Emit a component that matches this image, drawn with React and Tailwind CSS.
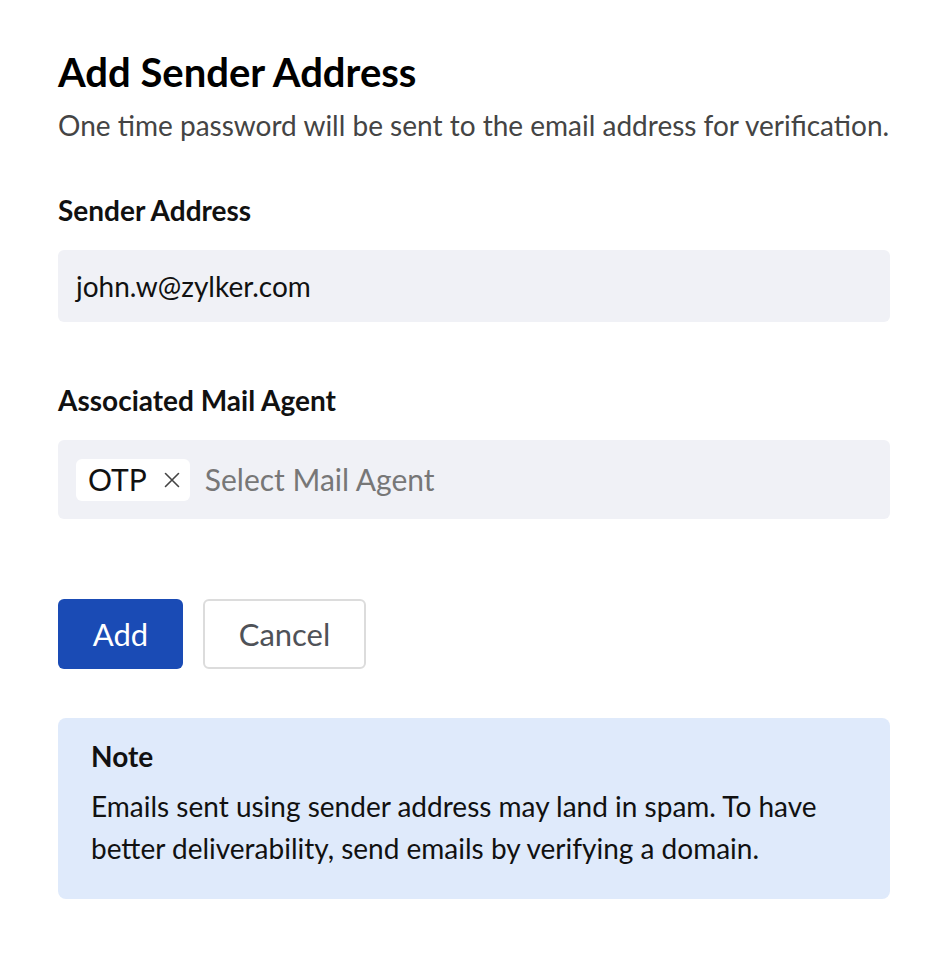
import React from 'react';

const App = () => {
  return (
    <div className="min-h-screen bg-white font-['Lato',sans-serif] text-[#111]">
      <div className="px-[58px] pt-[48px] w-[948px]">
        <h1 className="text-[40px] leading-[48px] font-bold text-black">Add Sender Address</h1>
        <p className="mt-[11px] text-[28px] leading-[36px] text-[#444]">
          One time password will be sent to the email address for verification.
        </p>

        {/* Sender Address */}
        <div className="mt-[49px]">
          <label className="block text-[28px] leading-[36px] font-bold">Sender Address</label>
          <div className="mt-[22px] h-[72px] rounded-[6px] bg-[#f0f1f6] px-[18px] flex items-center text-[28px]">
            john.w@zylker.com
          </div>
        </div>

        {/* Associated Mail Agent */}
        <div className="mt-[60px]">
          <label className="block text-[28px] leading-[36px] font-bold">Associated Mail Agent</label>
          <div className="mt-[22px] h-[79px] rounded-[6px] bg-[#f0f1f6] px-[18px] flex items-center gap-[15px]">
            <span className="flex items-center gap-[17px] bg-white rounded-[6px] h-[42px] pl-[12px] pr-[10px] text-[30px]">
              OTP
              <svg width="16" height="16" viewBox="0 0 16 16" className="text-[#444]">
                <path d="M1.5 1.5 L14.5 14.5 M14.5 1.5 L1.5 14.5" stroke="currentColor" strokeWidth="1.6" strokeLinecap="round" />
              </svg>
            </span>
            <span className="text-[30px] text-[#777]">Select Mail Agent</span>
          </div>
        </div>

        {/* Buttons */}
        <div className="mt-[80px] flex gap-[20px]">
          <button className="h-[70px] w-[125px] rounded-[6px] bg-[#1a4bb5] text-white text-[31px]">Add</button>
          <button className="h-[70px] w-[163px] rounded-[6px] border-2 border-[#dcdcdc] bg-white text-[#4f5258] text-[31px]">
            Cancel
          </button>
        </div>

        {/* Note */}
        <div className="mt-[49px] rounded-[8px] bg-[#dfeafb] px-[33px] pt-[20px] pb-[30px]">
          <h3 className="text-[28px] leading-[36px] font-bold">Note</h3>
          <p className="mt-[11px] text-[28px] leading-[42px]">
            Emails sent using sender address may land in spam. To have better deliverability, send emails by verifying a domain.
          </p>
        </div>
      </div>
    </div>
  );
};

export default App;
